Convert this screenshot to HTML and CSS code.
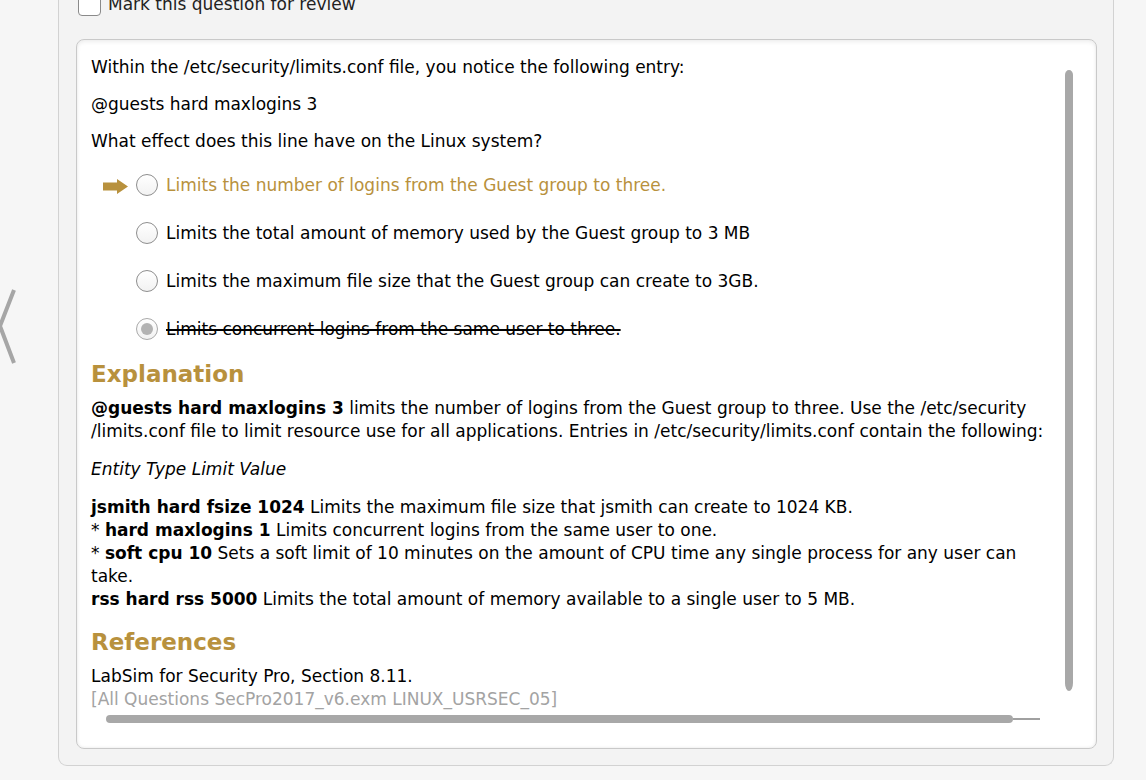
FILE: index.html
```html
<!DOCTYPE html>
<html>
<head>
<meta charset="utf-8">
<link rel="stylesheet" href="styles.css">
</head>
<body>
<div class="page">
  <div class="nav-prev">
    <svg class="chevron" width="20" height="80" viewBox="0 0 20 80"><polyline points="15,2 1,38 15,75" fill="none" stroke="#a6a6a6" stroke-width="4" stroke-linejoin="miter"/></svg>
  </div>
  <div class="panel">
    <label class="review">
      <span class="checkbox"></span>
      <span class="review-text">Mark this question for review</span>
    </label>
    <div class="card">
      <div class="scroll-area">
        <div class="content">
          <p class="q">Within the /etc/security/limits.conf file, you notice the following entry:</p>
          <p class="q">@guests hard maxlogins 3</p>
          <p class="q last">What effect does this line have on the Linux system?</p>
          <div class="options">
            <div class="option correct">
              <span class="marker"><svg width="25" height="15" viewBox="0 0 25 15"><path d="M0 3.5H14V0L25 7.5L14 15V11.5H0Z" fill="#b8913d"/></svg></span>
              <span class="radio"></span>
              <span class="opt-text">Limits the number of logins from the Guest group to three.</span>
            </div>
            <div class="option">
              <span class="marker"></span>
              <span class="radio"></span>
              <span class="opt-text">Limits the total amount of memory used by the Guest group to 3 MB</span>
            </div>
            <div class="option">
              <span class="marker"></span>
              <span class="radio"></span>
              <span class="opt-text">Limits the maximum file size that the Guest group can create to 3GB.</span>
            </div>
            <div class="option chosen">
              <span class="marker"></span>
              <span class="radio checked"></span>
              <span class="opt-text struck">Limits concurrent logins from the same user to three.</span>
            </div>
          </div>
          <h2 class="heading">Explanation</h2>
          <p class="para"><b>@guests hard maxlogins 3</b> limits the number of logins from the Guest group to three. Use the /etc/security<br>/limits.conf file to limit resource use for all applications. Entries in /etc/security/limits.conf contain the following:</p>
          <p class="para"><i>Entity Type Limit Value</i></p>
          <p class="para"><b>jsmith hard fsize 1024</b> Limits the maximum file size that jsmith can create to 1024 KB.<br>* <b>hard maxlogins 1</b> Limits concurrent logins from the same user to one.<br>* <b>soft cpu 10</b> Sets a soft limit of 10 minutes on the amount of CPU time any single process for any user can<br>take.<br><b>rss hard rss 5000</b> Limits the total amount of memory available to a single user to 5 MB.</p>
          <h2 class="heading refs">References</h2>
          <p class="ref">LabSim for Security Pro, Section 8.11.<br><span class="ref-id">[All Questions SecPro2017_v6.exm LINUX_USRSEC_05]</span></p>
        </div>
        <div class="vtrack"><div class="vthumb"></div></div>
      </div>
      <div class="hbar-row">
        <div class="hthumb"></div>
        <div class="hline"></div>
      </div>
    </div>
  </div>
</div>
</body>
</html>
```
FILE: styles.css
```css
html, body {
  margin: 0;
  padding: 0;
  height: 780px;
  overflow: hidden;
  background: #f6f6f6;
  font-family: "DejaVu Sans", Verdana, sans-serif;
  font-size: 17px;
  color: #000;
}

.page {
  display: flex;
  margin-top: -20px;
}

.nav-prev {
  width: 58px;
  flex: none;
}

.chevron {
  display: block;
  margin-top: 308px;
  margin-left: -1px;
}

.panel {
  width: 1056px;
  flex: none;
  box-sizing: border-box;
  background: #f3f3f3;
  border: 1px solid #d2d2d2;
  border-top: none;
  border-radius: 0 0 9px 9px;
  padding: 13px 16px 16px 17px;
}

.review {
  display: flex;
  align-items: center;
  height: 23px;
  padding-left: 2px;
}

.checkbox {
  width: 21px;
  height: 21px;
  border: 1px solid #8a8a8a;
  border-radius: 4px;
  background: #fff;
  flex: none;
}

.review-text {
  margin-left: 7px;
  font-size: 17px;
  color: #222;
  line-height: 23px;
}

.card {
  margin-top: 23px;
  height: 708px;
  background: #fff;
  border: 1px solid #c9c9c9;
  border-radius: 8px;
  box-shadow: inset 0 2px 4px rgba(0, 0, 0, 0.07), inset 0 -1px 3px rgba(0, 0, 0, 0.05);
  display: flex;
  flex-direction: column;
  overflow: hidden;
}

.scroll-area {
  display: flex;
  height: 675px;
  flex: none;
}

.content {
  flex: 1;
  padding: 16px 0 0 14px;
  overflow: hidden;
  white-space: nowrap;
}

p {
  margin: 0;
}

.q {
  line-height: 23px;
  margin-bottom: 14px;
}

.q.last {
  margin-bottom: 8px;
}

.options {
  margin-bottom: 6px;
}

.option {
  display: flex;
  align-items: center;
  height: 48px;
}

.marker {
  width: 37px;
  margin-right: 8px;
  display: flex;
  justify-content: flex-end;
  align-items: center;
  flex: none;
}

.marker svg {
  display: block;
  margin-top: 2px;
}

.radio {
  width: 20px;
  height: 20px;
  border: 1px solid #8e8e8e;
  border-radius: 50%;
  background: linear-gradient(#ffffff, #f2f2f2);
  flex: none;
  display: flex;
  align-items: center;
  justify-content: center;
}

.radio.checked {
  border-color: #a9a9a9;
}

.radio.checked::after {
  content: "";
  width: 12px;
  height: 12px;
  border-radius: 50%;
  background: #b3b3b3;
}

.opt-text {
  margin-left: 8px;
  line-height: 23px;
}

.option.correct .opt-text {
  color: #b8913d;
}

.struck {
  text-decoration: line-through;
  text-decoration-thickness: 1.5px;
}

.heading {
  margin: 0 0 8px;
  font-size: 23px;
  line-height: 30px;
  font-weight: bold;
  color: #b8913d;
}

.heading.refs {
  margin-top: 16px;
}

.para {
  line-height: 23px;
  margin-bottom: 15px;
}

.para:last-of-type {
  margin-bottom: 0;
}

.ref {
  line-height: 23px;
}

.ref-id {
  color: #a3a3a3;
}

.vtrack {
  width: 8px;
  margin: 30px 23px 0 12px;
  height: 621px;
  flex: none;
}

.vthumb {
  height: 100%;
  background: #a8a8a8;
  border-radius: 4px 4px 4px 4px / 5px 5px 8px 8px;
}

.hbar-row {
  display: flex;
  align-items: center;
  height: 8px;
  padding-left: 29px;
}

.hthumb {
  width: 907px;
  height: 8px;
  border-radius: 4px;
  background: #a8a8a8;
  flex: none;
}

.hline {
  width: 27px;
  height: 2px;
  background: #a0a0a0;
  flex: none;
}
```
